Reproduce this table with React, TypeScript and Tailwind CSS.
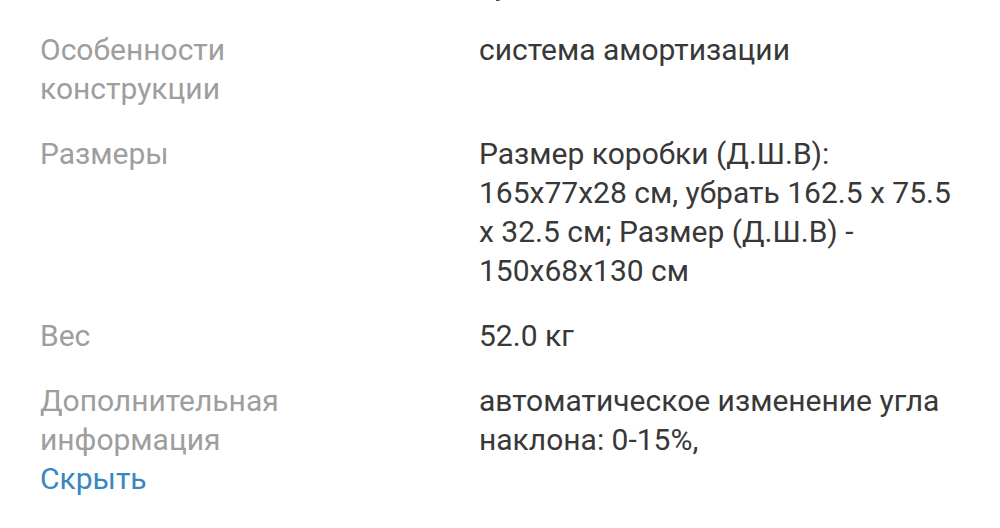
import React from 'react';

type Spec = { label: string; value: string };

const specs: Spec[] = [
  { label: 'Тип', value: 'сухая' },
  { label: 'Особенности конструкции', value: 'система амортизации' },
  {
    label: 'Размеры',
    value:
      'Размер коробки (Д.Ш.В): 165x77x28 см, убрать 162.5 x 75.5 x 32.5 см; Размер (Д.Ш.В) - 150x68x130 см',
  },
  { label: 'Вес', value: '52.0 кг' },
];

export default function App() {
  return (
    <div className="w-[1000px] h-[528px] overflow-hidden bg-white font-['Roboto',sans-serif] text-[30px] leading-[39px]">
      <div className="-mt-[35px] px-10 flex flex-col gap-[26px]">
        {specs.map((s) => (
          <div key={s.label} className="flex">
            <div className="w-[439px] shrink-0 pr-[100px] text-[#9e9e9e]">{s.label}</div>
            <div className="flex-1 text-[#383838]">{s.value}</div>
          </div>
        ))}
        <div className="flex">
          <div className="w-[439px] shrink-0 pr-[100px]">
            <div className="text-[#9e9e9e]">Дополнительная информация</div>
            <button className="text-[#3a86c2] leading-[39px]">Скрыть</button>
          </div>
          <div className="flex-1 text-[#383838]">автоматическое изменение угла наклона: 0-15%,</div>
        </div>
      </div>
    </div>
  );
}
